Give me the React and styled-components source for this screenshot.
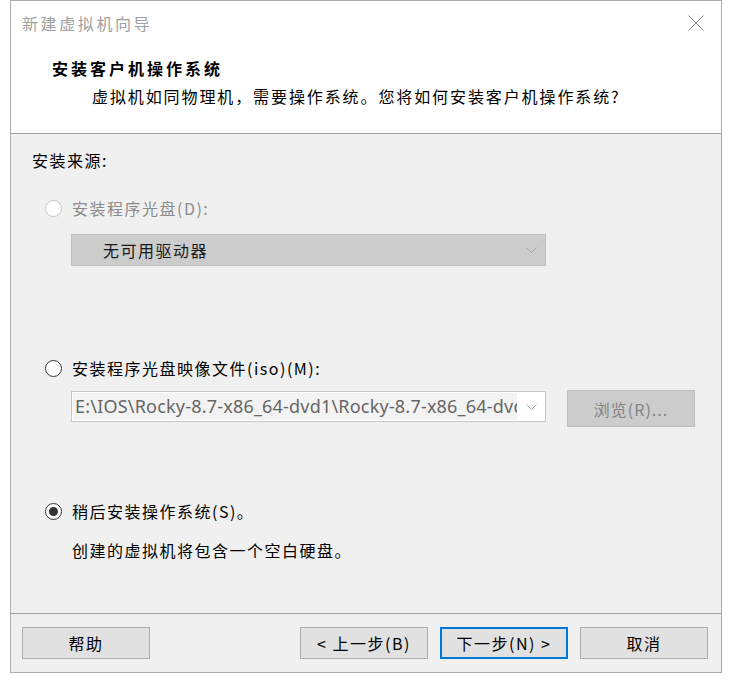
import styled, { createGlobalStyle, css } from "styled-components"

const GlobalStyle = createGlobalStyle`
  body {
    margin: 0;
    background: #fff;
    font-family: "Noto Sans CJK SC", "Noto Sans", sans-serif;
  }
`

export default function App() {
  return (
    <>
      <GlobalStyle />
      <Window>
        <TitleBar>
          <span>新建虚拟机向导</span>
          <svg width="16" height="16" viewBox="0 0 16 16">
            <path d="M0.5 0.5 L15.5 15.5 M15.5 0.5 L0.5 15.5" stroke="#8a8a8a" strokeWidth="1" fill="none" />
          </svg>
        </TitleBar>

        <Header>
          <HeaderTitle>安装客户机操作系统</HeaderTitle>
          <HeaderSub>虚拟机如同物理机，需要操作系统。您将如何安装客户机操作系统?</HeaderSub>
        </Header>

        <Body>
          <SectionLabel>安装来源:</SectionLabel>

          <RadioRow $top={26} $disabled>
            <Radio $disabled />
            <span>安装程序光盘(D):</span>
          </RadioRow>
          <Select $top={15} $disabled>
            <span>无可用驱动器</span>
            <Chevron />
          </Select>

          <RadioRow $top={91}>
            <Radio />
            <span>安装程序光盘映像文件(iso)(M):</span>
          </RadioRow>
          <FileRow>
            <Combo>
              <PathText>E:\IOS\Rocky-8.7-x86_64-dvd1\Rocky-8.7-x86_64-dvd1.iso</PathText>
              <Chevron />
            </Combo>
            <BrowseButton disabled>浏览(R)...</BrowseButton>
          </FileRow>

          <RadioRow $top={73}>
            <Radio $checked />
            <span>稍后安装操作系统(S)。</span>
          </RadioRow>
          <Note>创建的虚拟机将包含一个空白硬盘。</Note>
        </Body>

        <Footer>
          <Button>帮助</Button>
          <Spacer />
          <Button>&lt; 上一步(B)</Button>
          <Button $primary>下一步(N) &gt;</Button>
          <Button>取消</Button>
        </Footer>
      </Window>
    </>
  )
}

function Chevron() {
  return (
    <ChevronIcon width="11" height="6" viewBox="0 0 11 6">
      <polyline points="0.5,0.5 5.5,5.5 10.5,0.5" fill="none" stroke="#a8a8a8" strokeWidth="1" />
    </ChevronIcon>
  )
}

const Window = styled.div`
  margin-left: 10px;
  width: 712px;
  height: 673px;
  box-sizing: border-box;
  border: 1px solid #ababab;
  background: #fff;
  display: flex;
  flex-direction: column;
`

const TitleBar = styled.div`
  height: 44px;
  flex-shrink: 0;
  display: flex;
  align-items: center;
  justify-content: space-between;
  padding: 0 17px 0 11px;
  font-size: 16px;
  letter-spacing: 2.6px;
  color: #a0a0a0;
`

const Header = styled.div`
  height: 89px;
  flex-shrink: 0;
  box-sizing: border-box;
  border-bottom: 1px solid #a0a0a0;
  padding-left: 41px;
  display: flex;
  flex-direction: column;
`

const HeaderTitle = styled.div`
  margin-top: 12px;
  line-height: 22px;
  font-size: 16px;
  font-weight: 700;
  letter-spacing: 3px;
  color: #000;
`

const HeaderSub = styled.div`
  margin-top: 6px;
  margin-left: 40px;
  line-height: 22px;
  font-size: 16px;
  letter-spacing: 1.9px;
  color: #000;
`

const Body = styled.div`
  flex: 1;
  background: #f0f0f0;
  padding: 15px 0 0 21px;
  display: flex;
  flex-direction: column;
  font-size: 16px;
  letter-spacing: 1.5px;
  color: #000;
`

const SectionLabel = styled.div`
  line-height: 22px;
`

const RadioRow = styled.div`
  margin-top: ${p => p.$top}px;
  height: 22px;
  display: flex;
  align-items: center;
  gap: 10px;
  padding-left: 13px;
  color: ${p => (p.$disabled ? "#8c8c8c" : "#000")};
`

const Radio = styled.span`
  width: 17px;
  height: 17px;
  box-sizing: border-box;
  border-radius: 50%;
  flex-shrink: 0;
  background: #fff;
  border: 1px solid ${p => (p.$disabled ? "#c4c4c4" : "#333")};
  display: flex;
  align-items: center;
  justify-content: center;
  ${p =>
    p.$checked &&
    css`
      &::after {
        content: "";
        width: 9px;
        height: 9px;
        border-radius: 50%;
        background: #333;
      }
    `}
`

const Select = styled.div`
  margin: ${p => p.$top}px 0 0 39px;
  width: 475px;
  height: 32px;
  box-sizing: border-box;
  border: 1px solid #bfbfbf;
  background: #cccccc;
  display: flex;
  align-items: center;
  justify-content: space-between;
  padding: 0 8px 0 31px;
  color: #1a1a1a;
`

const ChevronIcon = styled.svg`
  flex-shrink: 0;
`

const FileRow = styled.div`
  margin: 11px 0 0 39px;
  display: flex;
  align-items: flex-start;
  gap: 21px;
`

const Combo = styled.div`
  margin-top: 1px;
  width: 475px;
  height: 31px;
  box-sizing: border-box;
  border: 1px solid #c6c6c6;
  background: #fff;
  display: flex;
  align-items: center;
  padding: 0 8px 0 1px;
  gap: 9px;
`

const PathText = styled.div`
  flex: 1;
  height: 27px;
  line-height: 27px;
  padding-left: 2px;
  background: #f3f3f3;
  font-family: "Noto Sans", sans-serif;
  font-size: 18px;
  letter-spacing: 0.2px;
  color: #666;
  white-space: nowrap;
  overflow: hidden;
`

const BrowseButton = styled.button`
  width: 128px;
  height: 37px;
  border: 1px solid #bfbfbf;
  background: #cccccc;
  color: #838383;
  font-family: inherit;
  font-size: 16px;
  letter-spacing: 1px;
  padding: 0;
`

const Note = styled.div`
  margin: 17px 0 0 40px;
  line-height: 22px;
`

const Footer = styled.div`
  height: 59px;
  flex-shrink: 0;
  box-sizing: border-box;
  border-top: 1px solid #a0a0a0;
  background: #f0f0f0;
  display: flex;
  align-items: flex-start;
  gap: 12px;
  padding: 13px 13px 0 11px;
`

const Spacer = styled.div`
  flex: 1;
`

const Button = styled.button`
  width: 128px;
  height: 32px;
  box-sizing: border-box;
  padding: 0;
  background: #e1e1e1;
  border: ${p => (p.$primary ? "2px solid #0078d7" : "1px solid #adadad")};
  color: #000;
  font-family: "Noto Sans CJK SC", "Noto Sans", sans-serif;
  font-size: 16px;
  letter-spacing: 1.5px;
`
